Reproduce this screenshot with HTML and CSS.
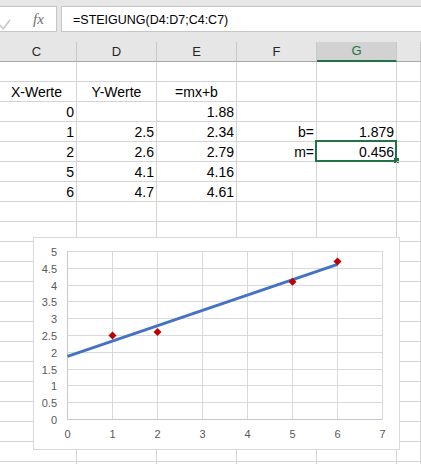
FILE: index.html
```html
<!DOCTYPE html>
<html lang="de">
<head>
<meta charset="utf-8">
<title>STEIGUNG</title>
<link rel="stylesheet" href="styles.css">
</head>
<body>
<div class="app">
  <div class="bar">
    <div class="namebox">
      <svg class="check" width="12" height="24" viewBox="0 0 12 24"><polyline points="0,18 3,22 10,13" fill="none" stroke="#c8c8c8" stroke-width="1.6"/></svg>
      <span class="fx">fx</span>
    </div>
    <div class="formula">=STEIGUNG(D4:D7;C4:C7)</div>
  </div>
  <div class="sheet">
    <div class="row"><div class="h">C</div><div class="h">D</div><div class="h">E</div><div class="h">F</div><div class="h hsel">G</div><div class="h"></div></div>
    <div class="row"><div class="c"></div><div class="c"></div><div class="c"></div><div class="c"></div><div class="c"></div><div class="c"></div></div>
    <div class="row"><div class="c m">X-Werte</div><div class="c m">Y-Werte</div><div class="c m">=mx+b</div><div class="c"></div><div class="c"></div><div class="c"></div></div>
    <div class="row"><div class="c r">0</div><div class="c"></div><div class="c r">1.88</div><div class="c"></div><div class="c"></div><div class="c"></div></div>
    <div class="row"><div class="c r">1</div><div class="c r">2.5</div><div class="c r">2.34</div><div class="c r">b=</div><div class="c r">1.879</div><div class="c"></div></div>
    <div class="row"><div class="c r">2</div><div class="c r">2.6</div><div class="c r">2.79</div><div class="c r">m=</div><div class="c r active">0.456</div><div class="c"></div></div>
    <div class="row"><div class="c r">5</div><div class="c r">4.1</div><div class="c r">4.16</div><div class="c"></div><div class="c"></div><div class="c"></div></div>
    <div class="row"><div class="c r">6</div><div class="c r">4.7</div><div class="c r">4.61</div><div class="c"></div><div class="c"></div><div class="c"></div></div>
    <div class="row"><div class="c"></div><div class="c"></div><div class="c"></div><div class="c"></div><div class="c"></div><div class="c"></div></div>
    <div class="row"><div class="c"></div><div class="c"></div><div class="c"></div><div class="c"></div><div class="c"></div><div class="c"></div></div>
    <div class="row"><div class="c"></div><div class="c"></div><div class="c"></div><div class="c"></div><div class="c"></div><div class="c"></div></div>
    <div class="row"><div class="c"></div><div class="c"></div><div class="c"></div><div class="c"></div><div class="c"></div><div class="c"></div></div>
    <div class="row"><div class="c"></div><div class="c"></div><div class="c"></div><div class="c"></div><div class="c"></div><div class="c"></div></div>
    <div class="row"><div class="c"></div><div class="c"></div><div class="c"></div><div class="c"></div><div class="c"></div><div class="c"></div></div>
    <div class="row"><div class="c"></div><div class="c"></div><div class="c"></div><div class="c"></div><div class="c"></div><div class="c"></div></div>
    <div class="row"><div class="c"></div><div class="c"></div><div class="c"></div><div class="c"></div><div class="c"></div><div class="c"></div></div>
    <div class="row"><div class="c"></div><div class="c"></div><div class="c"></div><div class="c"></div><div class="c"></div><div class="c"></div></div>
    <div class="row"><div class="c"></div><div class="c"></div><div class="c"></div><div class="c"></div><div class="c"></div><div class="c"></div></div>
    <div class="row"><div class="c"></div><div class="c"></div><div class="c"></div><div class="c"></div><div class="c"></div><div class="c"></div></div>
    <div class="row"><div class="c"></div><div class="c"></div><div class="c"></div><div class="c"></div><div class="c"></div><div class="c"></div></div>
    <div class="row"><div class="c"></div><div class="c"></div><div class="c"></div><div class="c"></div><div class="c"></div><div class="c"></div></div>
    <div class="row"><div class="c"></div><div class="c"></div><div class="c"></div><div class="c"></div><div class="c"></div><div class="c"></div></div>
  </div>
  <svg class="chart" width="367" height="213" viewBox="33 237 367 213">
    <rect x="33.5" y="237.5" width="366" height="212" fill="#fff" stroke="#d9d9d9"/>
    <g stroke="#d9d9d9" stroke-width="1">
      <line x1="67" y1="251.5" x2="382.5" y2="251.5"/>
      <line x1="67" y1="268.5" x2="382.5" y2="268.5"/>
      <line x1="67" y1="285.5" x2="382.5" y2="285.5"/>
      <line x1="67" y1="301.5" x2="382.5" y2="301.5"/>
      <line x1="67" y1="318.5" x2="382.5" y2="318.5"/>
      <line x1="67" y1="335.5" x2="382.5" y2="335.5"/>
      <line x1="67" y1="352.5" x2="382.5" y2="352.5"/>
      <line x1="67" y1="369.5" x2="382.5" y2="369.5"/>
      <line x1="67" y1="385.5" x2="382.5" y2="385.5"/>
      <line x1="67" y1="402.5" x2="382.5" y2="402.5"/>
      <line x1="112.5" y1="251" x2="112.5" y2="419"/>
      <line x1="157.5" y1="251" x2="157.5" y2="419"/>
      <line x1="202.5" y1="251" x2="202.5" y2="419"/>
      <line x1="247.5" y1="251" x2="247.5" y2="419"/>
      <line x1="292.5" y1="251" x2="292.5" y2="419"/>
      <line x1="337.5" y1="251" x2="337.5" y2="419"/>
      <line x1="382.5" y1="251" x2="382.5" y2="419"/>
    </g>
    <g stroke="#c8c8c8" stroke-width="1">
      <line x1="67.5" y1="251" x2="67.5" y2="420"/>
      <line x1="67" y1="419.5" x2="382.5" y2="419.5"/>
    </g>
    <g class="ylab" text-anchor="end">
      <text x="57" y="255.5">5</text>
      <text x="57" y="272.5">4.5</text>
      <text x="57" y="289.5">4</text>
      <text x="57" y="305.5">3.5</text>
      <text x="57" y="322.5">3</text>
      <text x="57" y="339.5">2.5</text>
      <text x="57" y="356.5">2</text>
      <text x="57" y="373.5">1.5</text>
      <text x="57" y="389.5">1</text>
      <text x="57" y="406.5">0.5</text>
      <text x="57" y="423.5">0</text>
    </g>
    <g class="xlab" text-anchor="middle">
      <text x="67.5" y="437.5">0</text>
      <text x="112.5" y="437.5">1</text>
      <text x="157.5" y="437.5">2</text>
      <text x="202.5" y="437.5">3</text>
      <text x="247.5" y="437.5">4</text>
      <text x="292.5" y="437.5">5</text>
      <text x="337.5" y="437.5">6</text>
      <text x="382.5" y="437.5">7</text>
    </g>
    <line x1="67.5" y1="356.4" x2="337.5" y2="264.4" stroke="#4472c4" stroke-width="3"/>
    <g fill="#c00000">
      <polygon points="112.5,331.5 116.5,335.5 112.5,339.5 108.5,335.5"/>
      <polygon points="157.5,328.1 161.5,332.1 157.5,336.1 153.5,332.1"/>
      <polygon points="292.5,277.7 296.5,281.7 292.5,285.7 288.5,281.7"/>
      <polygon points="337.5,257.6 341.5,261.6 337.5,265.6 333.5,261.6"/>
    </g>
  </svg>
</div>
</body>
</html>
```
FILE: styles.css
```css
html, body {
  margin: 0;
  padding: 0;
  background: #fff;
  overflow: hidden;
}
.app {
  position: relative;
  width: 421px;
  height: 464px;
  overflow: hidden;
  font-family: "Liberation Sans", Arial, sans-serif;
  color: #000;
}
.bar {
  height: 42px;
  box-sizing: border-box;
  padding-top: 6px;
  background: #e6e6e6;
  display: flex;
  gap: 4px;
}
.namebox {
  width: 57px;
  height: 26px;
  box-sizing: border-box;
  background: #fff;
  border: 1px solid #c6c6c6;
  border-left: 0;
  display: flex;
  align-items: center;
}
.check {
  display: block;
}
.fx {
  margin-left: 21px;
  font-family: "Liberation Serif", "Times New Roman", serif;
  font-style: italic;
  font-size: 15px;
  color: #6e6e6e;
  line-height: 24px;
}
.formula {
  flex: 1;
  height: 26px;
  box-sizing: border-box;
  background: #fff;
  border: 1px solid #c6c6c6;
  border-right: 0;
  padding: 2px 0 0 11px;
  font-size: 12.5px;
  line-height: 22px;
  white-space: nowrap;
}
.sheet {
  margin-left: -3px;
}
.row {
  display: grid;
  grid-template-columns: repeat(5, 80px) 1fr;
}
.h {
  height: 20px;
  box-sizing: border-box;
  background: #e6e6e6;
  border-right: 1px solid #c8c8c8;
  border-bottom: 1px solid #a6a6a6;
  text-align: center;
  font-size: 13px;
  line-height: 19px;
  color: #262626;
}
.hsel {
  background: #d2d2d2;
  border-bottom: 2px solid #217346;
  color: #217346;
  line-height: 18px;
}
.c {
  position: relative;
  height: 20px;
  box-sizing: border-box;
  border-right: 1px solid #d4d4d4;
  border-bottom: 1px solid #d4d4d4;
  padding: 1px 2px 0;
  font-size: 14px;
  line-height: 18px;
  white-space: nowrap;
}
.r {
  text-align: right;
}
.m {
  text-align: center;
}
.active::before {
  content: "";
  position: absolute;
  left: -2px;
  top: -2px;
  right: -1px;
  bottom: -1px;
  border: 2px solid #217346;
}
.active::after {
  content: "";
  position: absolute;
  left: 77px;
  top: 16px;
  width: 5px;
  height: 5px;
  background: #217346;
}
.chart {
  position: absolute;
  left: 33px;
  top: 237px;
}
.ylab text, .xlab text {
  font-family: "Liberation Sans", Arial, sans-serif;
  font-size: 11px;
  fill: #595959;
}
```
